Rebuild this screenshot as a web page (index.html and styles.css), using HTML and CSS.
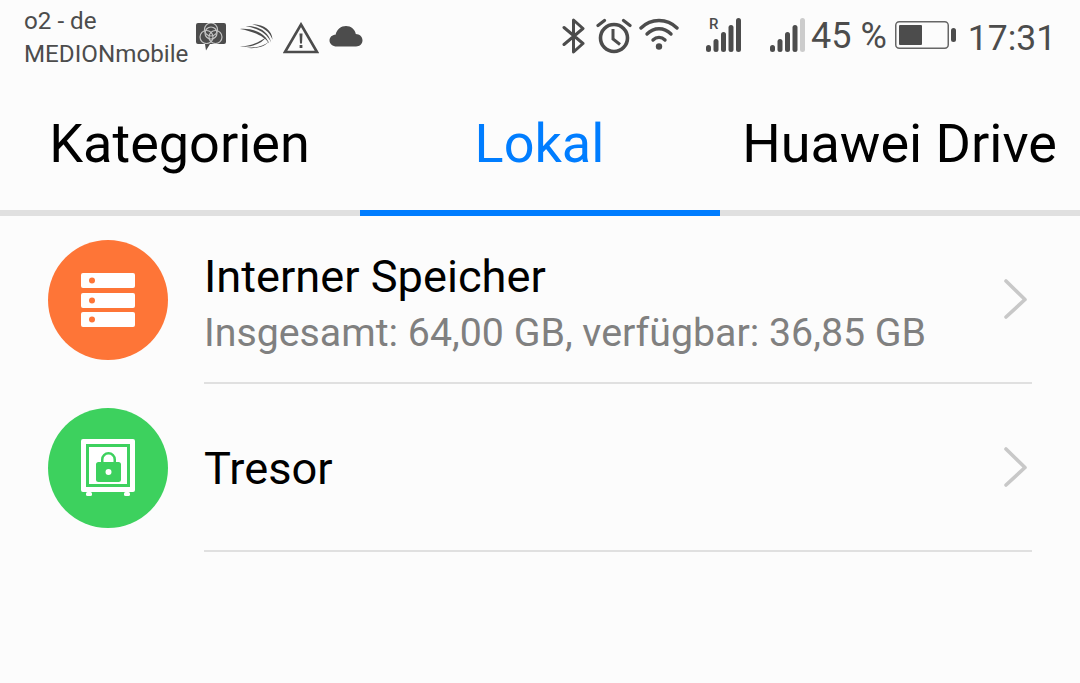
FILE: index.html
```html
<!DOCTYPE html>
<html lang="de">
<head>
<meta charset="utf-8">
<title>Dateien</title>
<link rel="stylesheet" href="styles.css">
</head>
<body>
<div class="status">
  <div class="carrier"><span>o2 - de</span><span>MEDIONmobile</span></div>
  <div class="notif">
    <svg class="i-chat" viewBox="0 0 30 28"><defs><clipPath id="cb"><rect x="0" y="0" width="30" height="21"/></clipPath></defs><path d="M2 0H28A2 2 0 0 1 30 2V19A2 2 0 0 1 28 21H14L10 27.500L9 21H2A2 2 0 0 1 0 19V2A2 2 0 0 1 2 0Z" fill="#4c4c4c"/><g fill="none" stroke="#c4c4c4" stroke-width="1.200" clip-path="url(#cb)"><circle cx="15" cy="10" r="6"/><circle cx="15" cy="6.500" r="6.500"/><circle cx="10.500" cy="14" r="6.500"/><circle cx="19.500" cy="14" r="6.500"/></g></svg>
    <svg class="i-swift" viewBox="0 0 36 26"><g fill="#4c4c4c"><path d="M1 5.500C14 4.500 27 9 32 21C27 13 15 8 1 5.500Z"/><path d="M7 2.500C19 2 31 7 34 20C29 9 19 5 7 2.500Z"/><path d="M14 .5C25 .5 35 6 35.500 17C32 7 24 3 14 .5Z"/><path d="M1 24C11 24 21 20 29 14C24 21 12 26 1 24Z"/><path d="M8 25.500C17 25.500 26 24 32 18.500C28 24 18 27 8 25.500Z"/></g></svg>
    <svg class="i-warn" viewBox="0 0 36 32"><path d="M18 2.500L34 30H2Z" fill="none" stroke="#4c4c4c" stroke-width="2.600"/><path d="M16.500 11.500H19.500L19 21.500H17Z" fill="#4c4c4c"/><rect x="16.600" y="23" width="2.800" height="3" fill="#4c4c4c"/></svg>
    <svg class="i-cloud" viewBox="0 0 34 22"><path d="M8 21.500C3.500 21.500 .5 18.800 .5 15.500C.5 12.200 3.200 9.800 6.500 9.800C8 4.200 12 1 17 1C22 1 26 4.500 26.800 9C30.500 9 33.500 11.800 33.500 15.300C33.500 18.800 30.800 21.500 27 21.500Z" fill="#4c4c4c"/></svg>
  </div>
  <div class="sys">
    <svg class="i-bt" viewBox="0 0 24 36"><path d="M2 9.500L21 25.500L11.500 34V2L21 10.500L2 26.500" fill="none" stroke="#4c4c4c" stroke-width="3" stroke-linejoin="round" stroke-linecap="round"/></svg>
    <svg class="i-alarm" viewBox="0 0 36 36"><circle cx="18" cy="20" r="13.500" fill="none" stroke="#4c4c4c" stroke-width="3.600"/><path d="M17 11V21L24 26.500" fill="none" stroke="#4c4c4c" stroke-width="3"/><path d="M2 7.500L8.500 2.500M34 7.500L27.500 2.500" stroke="#4c4c4c" stroke-width="3.200" stroke-linecap="round"/></svg>
    <svg class="i-wifi" viewBox="0 0 40 32"><g fill="none" stroke="#4c4c4c" stroke-width="3.400" stroke-linecap="round"><path d="M2 10C12 0 28 0 38 10"/><path d="M8 16C15 9 25 9 32 16"/><path d="M14 22C17.500 18.500 22.500 18.500 26 22"/></g><circle cx="20" cy="28.500" r="3.200" fill="#4c4c4c"/></svg>
    <div class="sig sig-r">
      <span class="r">R</span>
      <svg viewBox="0 0 36 34"><g fill="#4c4c4c"><rect x="0" y="27" width="5" height="7" rx="2.500"/><rect x="7.500" y="21" width="5" height="13" rx="2.500"/><rect x="15" y="14" width="5" height="20" rx="2.500"/><rect x="22.500" y="7" width="5" height="27" rx="2.500"/><rect x="30" y="0" width="5" height="34" rx="2.500"/></g></svg>
    </div>
    <svg class="sig2" viewBox="0 0 36 34"><g fill="#4c4c4c"><rect x="0" y="27" width="5" height="7" rx="2.500"/><rect x="7.500" y="21" width="5" height="13" rx="2.500"/><rect x="15" y="14" width="5" height="20" rx="2.500"/><rect x="22.500" y="7" width="5" height="27" rx="2.500"/><rect x="30" y="0" width="5" height="34" rx="2.500" fill="#cccccc"/></g></svg>
    <span class="pct">45 %</span>
    <svg class="i-batt" viewBox="0 0 62 30"><rect x=".75" y="1.750" width="52.500" height="26.500" rx="3.500" fill="none" stroke="#666" stroke-width="1.500"/><rect x="4" y="5" width="23" height="20" rx="1" fill="#4c4c4c"/><rect x="56" y="8" width="5" height="14" rx="2.500" fill="#4c4c4c"/></svg>
    <span class="time">17:31</span>
  </div>
</div>
<nav class="tabs">
  <div class="tab">Kategorien</div>
  <div class="tab active">Lokal</div>
  <div class="tab">Huawei Drive</div>
</nav>
<main class="list">
  <section class="row">
    <div class="icon orange">
      <svg viewBox="0 0 54 54" class="g"><rect y="0" width="54" height="15" rx="2" fill="#fff"/><rect y="20" width="54" height="15" rx="2" fill="#fff"/><rect y="39" width="54" height="15" rx="2" fill="#fff"/><circle cx="11" cy="7.500" r="3" fill="#fe7537"/><circle cx="11" cy="27.500" r="3" fill="#fe7537"/><circle cx="11" cy="46.500" r="3" fill="#fe7537"/></svg>
    </div>
    <div class="body">
      <div class="texts two"><div class="title">Interner Speicher</div><div class="sub">Insgesamt: 64,00 GB, verfügbar: 36,85 GB</div></div>
      <svg class="chev" viewBox="0 0 24 40"><path d="M2 2L21 20.500L2 38" fill="none" stroke="#c8c8c8" stroke-width="3.600" stroke-linecap="round" stroke-linejoin="round"/></svg>
    </div>
  </section>
  <section class="row">
    <div class="icon green">
      <svg viewBox="0 0 54 58" class="g2"><path fill-rule="evenodd" d="M2 0H52A2 2 0 0 1 54 2V51A2 2 0 0 1 52 53H2A2 2 0 0 1 0 51V2A2 2 0 0 1 2 0ZM5 5V48H49V5Z" fill="#fff"/><path fill-rule="evenodd" d="M8 8H46V45H8ZM15 26V40.500A2.500 2.500 0 0 0 17.500 43H37.500A2.500 2.500 0 0 0 40 40.500V25.500A2.500 2.500 0 0 0 37.500 23H35V20.500A7.500 7.500 0 0 0 20 20.500V23H17.500A2.500 2.500 0 0 0 15 25.500ZM22.500 23V20.500A5 5 0 0 1 32.500 20.500V23ZM27.500 30A3 3 0 1 1 27.500 36A3 3 0 0 1 27.500 30Z" fill="#fff"/><rect x="5" y="53" width="6" height="4" rx="1.500" fill="#fff"/><rect x="43" y="53" width="6" height="4" rx="1.500" fill="#fff"/></svg>
    </div>
    <div class="body">
      <div class="texts"><div class="title">Tresor</div></div>
      <svg class="chev" viewBox="0 0 24 40"><path d="M2 2L21 20.500L2 38" fill="none" stroke="#c8c8c8" stroke-width="3.600" stroke-linecap="round" stroke-linejoin="round"/></svg>
    </div>
  </section>
</main>
</body>
</html>
```
FILE: styles.css
```css
* { box-sizing: border-box; }
html, body { margin: 0; padding: 0; }
body {
  width: 1080px;
  height: 683px;
  overflow: hidden;
  background: #fcfcfc;
  font-family: Roboto, "Liberation Sans", sans-serif;
  color: #000;
}
svg { display: block; flex: none; }

.status {
  height: 72px;
  display: flex;
  align-items: flex-start;
  padding-left: 24px;
  color: #4c4c4c;
}
.carrier {
  display: flex;
  flex-direction: column;
  width: 172px;
  padding-top: 5px;
  font-size: 24.200px;
  line-height: 33px;
  white-space: nowrap;
}
.notif { display: flex; align-items: flex-start; padding-top: 22px; width: 180px; }
.i-chat { width: 30px; height: 28px; margin-top: 1px; }
.i-swift { width: 34px; height: 26px; margin: 1px 0 0 13px; }
.i-warn { width: 36px; height: 32px; margin: 0 0 0 10px; }
.i-cloud { width: 34px; height: 22px; margin: 3px 0 0 10px; }

.sys { display: flex; align-items: flex-start; margin-left: 186px; padding-top: 18px; }
.i-bt { width: 24px; height: 36px; }
.i-alarm { width: 36px; height: 36px; margin-left: 10px; }
.i-wifi { width: 40px; height: 32px; margin-left: 7px; }
.sig-r { position: relative; width: 36px; height: 34px; margin-left: 27px; }
.sig-r svg { width: 36px; height: 34px; }
.r {
  position: absolute;
  left: 3px;
  top: -1px;
  font-size: 15px;
  line-height: 14px;
  font-weight: 500;
}
.sig2 { width: 36px; height: 34px; margin-left: 28px; }
.pct { font-size: 36px; line-height: 36px; margin-left: 5px; }
.i-batt { width: 62px; height: 30px; margin: 2px 0 0 8px; }
.time { font-size: 35.500px; line-height: 40px; margin-left: 11px; }

.tabs { display: flex; height: 144px; border-bottom: 6px solid #e0e0e0; }
.tab {
  flex: 1;
  height: 144px;
  padding: 40px 1px 0 0;
  text-align: center;
  font-size: 54px;
  line-height: 64px;
  white-space: nowrap;
}
.tab.active { color: #007dff; border-bottom: 6px solid #007dff; }

.row { height: 168px; display: flex; padding-left: 48px; padding-right: 48px; }
.icon {
  width: 120px;
  height: 120px;
  margin-top: 24px;
  border-radius: 50%;
  display: flex;
  align-items: center;
  justify-content: center;
  flex: none;
}
.orange { background: #fe7537; }
.green { background: #3dd15e; }
.g { width: 54px; height: 54px; }
.g2 { width: 54px; height: 58px; }
.body {
  flex: 1;
  margin-left: 36px;
  border-bottom: 2px solid #e0e0e0;
  display: flex;
  align-items: center;
  justify-content: space-between;
}
.texts { padding-top: 3px; }
.texts.two { padding-top: 12px; }
.title { font-size: 45.200px; line-height: 57px; }
.sub { font-size: 39.300px; line-height: 57px; color: #808080; }
.chev { width: 24px; height: 40px; margin-right: 4px; }
```
